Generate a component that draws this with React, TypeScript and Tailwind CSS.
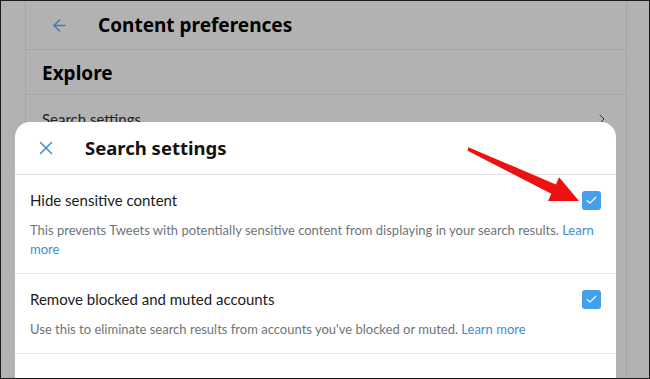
import { ArrowLeft, X, Check, ChevronRight } from "lucide-react";

const heading = { fontFamily: '"Noto Sans", "Open Sans", sans-serif' };
const body = { fontFamily: 'Lato, "Noto Sans", sans-serif' };

function Checkbox() {
  return (
    <div className="w-[19px] h-[19px] rounded-[3px] bg-[#45a0ea] flex items-center justify-center shrink-0">
      <Check className="w-[13px] h-[13px] text-white" strokeWidth={2} />
    </div>
  );
}

function SettingRow({ title, desc, link }: { title: string; desc: string; link: string }) {
  return (
    <div className="px-[15px] pt-[15px] pb-[14px] border-b border-[#e6ecf0]" style={body}>
      <div className="flex items-center justify-between">
        <span className="text-[15px] text-[#1c1c1c] leading-[20px]">{title}</span>
        <Checkbox />
      </div>
      <p className="mt-[11px] text-[13px] leading-[19px] text-[#6f7479]">
        {desc} <span className="text-[#3d8ed3]">{link}</span>
      </p>
    </div>
  );
}

export default function App() {
  return (
    <div className="relative w-[650px] h-[379px] overflow-hidden bg-[#b2b2b2] border border-[#1a1a1a]">
      <div className="ml-[24px] w-[602px] h-full border-x border-[#a6a6a6]">
        <div className="h-[49px] flex items-center border-b border-[#a3a3a3] pt-[1px]">
          <ArrowLeft className="ml-[24px] w-[19px] h-[19px] text-[#3f7fb5]" strokeWidth={2} />
          <h1 className="ml-[29px] text-[19px] font-bold text-black leading-none" style={heading}>
            Content preferences
          </h1>
        </div>
        <div className="h-[45px] flex items-center px-[16px] border-b border-[#a6a6a6] pt-[2px]">
          <h2 className="text-[19px] font-bold text-black leading-none" style={heading}>Explore</h2>
        </div>
        <div className="h-[48px] flex items-center justify-between px-[16px]" style={body}>
          <span className="text-[15px] text-[#222]">Search settings</span>
          <ChevronRight className="w-[16px] h-[16px] text-[#333]" strokeWidth={1.5} />
        </div>
      </div>

      <div className="absolute left-[14px] top-[121px] w-[601px] h-[270px] bg-white rounded-t-[15px]">
        <div className="h-[53px] flex items-center border-b border-[#dfe3e6]">
          <X className="ml-[20px] w-[22px] h-[22px] text-[#3a8fd6]" strokeWidth={1.6} />
          <h3 className="ml-[28px] text-[18.5px] font-bold text-[#111] leading-none" style={heading}>
            Search settings
          </h3>
        </div>
        <SettingRow
          title="Hide sensitive content"
          desc="This prevents Tweets with potentially sensitive content from displaying in your search results."
          link="Learn more"
        />
        <SettingRow
          title="Remove blocked and muted accounts"
          desc="Use this to eliminate search results from accounts you've blocked or muted."
          link="Learn more"
        />
      </div>

      <svg className="absolute left-0 top-0 pointer-events-none" width="650" height="379">
        <polygon
          points="467.4,146.2 554.9,183.5 558.1,176.3 578,200 547.1,199.9 550.3,192.7 466.6,149.8"
          fill="#ee1111"
        />
      </svg>
    </div>
  );
}
